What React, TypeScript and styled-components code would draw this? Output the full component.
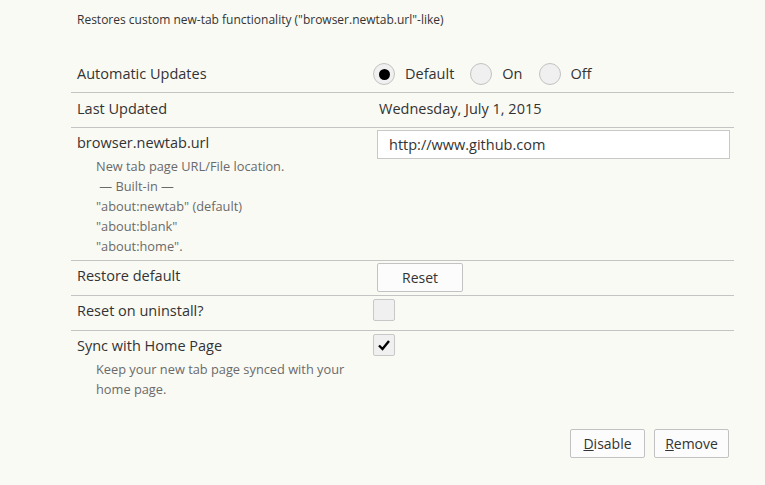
import React from "react";
import styled, { createGlobalStyle } from "styled-components";

const Global = createGlobalStyle`
  html, body { margin: 0; padding: 0; background: #fafaf5; }
  body { font-family: "Open Sans", "Liberation Sans", sans-serif; color: #333; }
  * { box-sizing: border-box; }
`;

const Page = styled.div`
  width: 765px;
  height: 485px;
  padding: 10px 31px 0 71px;
  display: flex;
  flex-direction: column;
`;

const Intro = styled.p`
  margin: 0 0 0 6px;
  font-size: 12px;
  line-height: 20px;
  color: #333;
`;

const Settings = styled.div`
  margin-top: 27px;
  display: flex;
  flex-direction: column;
`;

const Row = styled.div<{ $h?: number; $last?: boolean }>`
  display: grid;
  grid-template-columns: 296px 1fr;
  padding-left: 6px;
  min-height: ${(p) => p.$h ?? 35}px;
  border-bottom: ${(p) => (p.$last ? "none" : "1px solid #c4c4c4")};
`;

const LabelCol = styled.div<{ $pt?: number }>`
  display: flex;
  flex-direction: column;
  padding-top: ${(p) => p.$pt ?? 5}px;
`;

const Label = styled.div`
  font-size: 14.5px;
  line-height: 20px;
  color: #333;
`;

const Desc = styled.div`
  margin-top: 3px;
  padding-left: 19px;
  font-size: 12.8px;
  line-height: 20px;
  color: #6a6a6a;
  white-space: pre-line;
`;

const ValueCol = styled.div<{ $pt?: number; $pl?: number }>`
  display: flex;
  align-items: flex-start;
  padding-top: ${(p) => p.$pt ?? 3}px;
  padding-left: ${(p) => p.$pl ?? 0}px;
`;

const RadioGroup = styled.div`
  display: flex;
  align-items: center;
  gap: 16px;
`;

const RadioItem = styled.label`
  display: flex;
  align-items: center;
  gap: 10px;
  font-size: 14.5px;
  line-height: 22px;
`;

const RadioCircle = styled.span<{ $on?: boolean }>`
  width: 22px;
  height: 22px;
  border-radius: 50%;
  border: 1px solid #c2c2c2;
  background: #f0f0f0;
  display: flex;
  align-items: center;
  justify-content: center;
  &::after {
    content: "";
    width: 11px;
    height: 11px;
    border-radius: 50%;
    background: #000;
    display: ${(p) => (p.$on ? "block" : "none")};
  }
`;

const DateText = styled.div`
  font-size: 14.5px;
  line-height: 20px;
  padding-left: 6px;
`;

const TextInput = styled.div`
  width: 353px;
  height: 29px;
  border: 1px solid #c8c8c8;
  background: #fff;
  font-size: 14.5px;
  line-height: 27px;
  padding-left: 11px;
`;

const Button = styled.button<{ $w: number }>`
  width: ${(p) => p.$w}px;
  height: 29px;
  border: 1px solid #c2c2c2;
  border-radius: 2px;
  background: #fcfcfc;
  font-family: "Open Sans", "Liberation Sans", sans-serif;
  font-size: 14px;
  color: #333;
  padding: 0;
  u { text-decoration: underline; }
`;

const Check = styled.span`
  width: 22px;
  height: 22px;
  border: 1px solid #c8c8c8;
  border-radius: 2px;
  background: #f0f0f0;
  display: flex;
  align-items: center;
  justify-content: center;
`;

const Footer = styled.div`
  display: flex;
  justify-content: flex-end;
  gap: 9px;
  padding-right: 5px;
  margin-top: 30px;
`;

export default function App() {
  return (
    <>
      <Global />
      <Page>
        <Intro>Restores custom new-tab functionality ("browser.newtab.url"-like)</Intro>
        <Settings>
          <Row $h={36}>
            <LabelCol $pt={7}>
              <Label>Automatic Updates</Label>
            </LabelCol>
            <ValueCol $pt={6}>
              <RadioGroup>
                <RadioItem><RadioCircle $on />Default</RadioItem>
                <RadioItem><RadioCircle />On</RadioItem>
                <RadioItem><RadioCircle />Off</RadioItem>
              </RadioGroup>
            </ValueCol>
          </Row>
          <Row>
            <LabelCol $pt={6}>
              <Label>Last Updated</Label>
            </LabelCol>
            <ValueCol $pt={6}>
              <DateText>Wednesday, July 1, 2015</DateText>
            </ValueCol>
          </Row>
          <Row $h={133}>
            <LabelCol>
              <Label>browser.newtab.url</Label>
              <Desc>{"New tab page URL/File location.\n\u00a0\u2014 Built-in \u2014\n\"about:newtab\" (default)\n\"about:blank\"\n\"about:home\"."}</Desc>
            </LabelCol>
            <ValueCol $pt={2} $pl={4}>
              <TextInput>http://www.github.com</TextInput>
            </ValueCol>
          </Row>
          <Row>
            <LabelCol>
              <Label>Restore default</Label>
            </LabelCol>
            <ValueCol $pt={2} $pl={4}>
              <Button $w={86}>Reset</Button>
            </ValueCol>
          </Row>
          <Row>
            <LabelCol>
              <Label>Reset on uninstall?</Label>
            </LabelCol>
            <ValueCol $pt={3}>
              <Check />
            </ValueCol>
          </Row>
          <Row $last>
            <LabelCol>
              <Label>Sync with Home Page</Label>
              <Desc>{"Keep your new tab page synced with your\nhome page."}</Desc>
            </LabelCol>
            <ValueCol $pt={3}>
              <Check>
                <svg width="14" height="12" viewBox="0 0 14 12">
                  <path d="M2 6.5 L5.5 10 L12 2" fill="none" stroke="#000" strokeWidth="2.4" />
                </svg>
              </Check>
            </ValueCol>
          </Row>
        </Settings>
        <Footer>
          <Button $w={75}><u>D</u>isable</Button>
          <Button $w={75}><u>R</u>emove</Button>
        </Footer>
      </Page>
    </>
  );
}
